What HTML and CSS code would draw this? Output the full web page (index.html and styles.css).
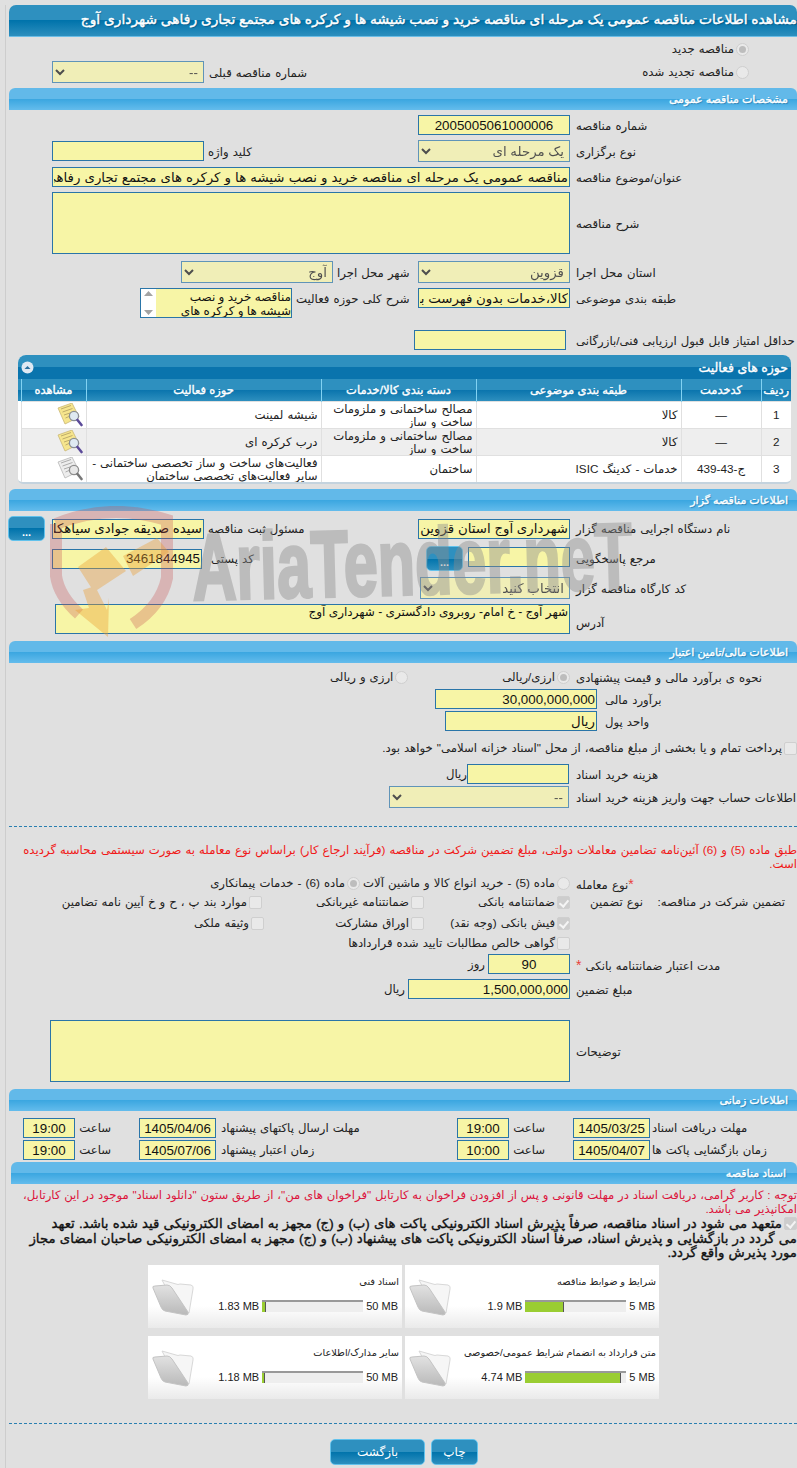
FILE: index.html
```html
<!DOCTYPE html>
<html lang="fa" dir="rtl">
<head>
    <meta charset="UTF-8">
    <title>مشاهده اطلاعات مناقصه</title>
    <link rel="stylesheet" href="styles.css">
</head>
<body>
<svg class="defs" width="0" height="0" aria-hidden="true">
    <defs>
        <linearGradient id="folder-front" x1="0" y1="0" x2="0" y2="1">
            <stop offset="0" stop-color="#e2e2e2"/>
            <stop offset="1" stop-color="#b9b9b9"/>
        </linearGradient>
    </defs>
    <symbol id="note" viewBox="0 0 26 24">
        <path d="M1 5 L15 0 L22 14 L8 21 Z" fill="currentColor" stroke="#c9b777" stroke-width=".8"/>
        <path d="M4 6 L14 2.5 M5.5 9 L15.5 5.5 M7 12 L13 10 M8.5 15 L12 13.5" stroke="#b7a566" stroke-width=".9"/>
        <circle cx="17" cy="13" r="4.6" fill="#dfeaf2" stroke="#8a8f96" stroke-width="1.3"/>
        <path d="M20.5 17 L24.5 22" class="handle" stroke-width="2.6" stroke-linecap="round"/>
    </symbol>
    <symbol id="folder" viewBox="0 0 44 40">
        <path d="M11 3 L25 7 Q27 8 29 7 L40 8 Q43 9 42 12 L38 36 L20 20 Z" fill="#f6f6f6" stroke="#d8d8d8"/>
        <path d="M2 11 Q1 9 4 9 L16 8 Q19 8 21 11 L37 35 Q38 38 35 38 L14 34 Q11 33 10 30 Z" fill="url(#folder-front)" stroke="#c4c4c4"/>
    </symbol>
</svg>

<div class="page">
    <h1 class="title">مشاهده اطلاعات مناقصه عمومی یک مرحله ای مناقصه خرید و نصب شیشه ها و کرکره های مجتمع تجاری رفاهی شهرداری آوج</h1>

    <div class="row h24 radio-top"><label class="opt opt-first"><input type="radio" disabled checked>مناقصه جدید</label></div>
    <div class="row h22">
        <label class="opt opt-first opt-w">
            <input type="radio" disabled>مناقصه تجدید شده
        </label>
        <span class="lab2 w-prev">شماره مناقصه قبلی</span>
        <select class="sel w152" disabled><option>--</option></select>
    </div>

    <h2 class="bar mt5">مشخصات مناقصه عمومی</h2>
    <div class="row h20 mt5"><span class="lab">شماره مناقصه</span><input class="inp w152 center" value="2005005061000006" readonly></div>
    <div class="row h22 mt5">
        <span class="lab">نوع برگزاری</span><select class="sel w152" disabled><option>یک مرحله ای</option></select>
        <span class="lab2 w214">کلید واژه</span><input class="inp w152" readonly>
    </div>
    <div class="row h20 mt5"><span class="lab">عنوان/موضوع مناقصه</span><input class="inp w518 wide" value="مناقصه عمومی یک مرحله ای مناقصه خرید و نصب شیشه ها و کرکره های مجتمع تجاری رفاهی شهرداری آوج" readonly></div>
    <div class="row h62 mt5"><span class="lab">شرح مناقصه</span><textarea class="inp w518 h62" readonly></textarea></div>
    <div class="row h22 mt7">
        <span class="lab">استان محل اجرا</span><select class="sel w152" disabled><option>قزوین</option></select>
        <span class="lab2 w85">شهر محل اجرا</span><select class="sel w152" disabled><option>آوج</option></select>
    </div>
    <div class="row h30 mt5 top">
        <span class="lab lab-top">طبقه بندی موضوعی</span><input class="inp w152" value="کالا،خدمات بدون فهرست بها" readonly>
        <span class="lab2 w126 lab-top">شرح کلی حوزه فعالیت</span>
        <div class="scrollbox">
            <textarea class="scroll-text" readonly>مناقصه خرید و نصب شیشه ها و کرکره های مجتمع تجاری رفاهی شهرداری آوج</textarea>
            <svg class="scroll-bar" width="15" height="28" viewBox="0 0 15 28"><path d="M3 7 L7.5 2 L12 7 Z M3 21 L12 21 L7.5 26 Z" fill="#a3a3a3"/></svg>
        </div>
    </div>
    <div class="row h20 mt12"><span class="lab">حداقل امتیاز قابل قبول ارزیابی فنی/بازرگانی</span><input class="inp w152 push4" readonly></div>

    <div class="panel">
        <div class="panel-title">
            <span>حوزه های فعالیت</span>
            <svg class="toggle" width="13" height="13" viewBox="0 0 13 13"><circle cx="6.5" cy="6.5" r="6" fill="#dfe9f3"/><path d="M3.5 8 L6.5 5 L9.5 8 Z" fill="#2a6f9e"/></svg>
        </div>
        <table class="grid">
            <colgroup><col class="c1"><col class="c2"><col class="c3"><col class="c4"><col class="c5"><col class="c6"></colgroup>
            <thead>
                <tr><th>ردیف</th><th>کدخدمت</th><th>طبقه بندی موضوعی</th><th>دسته بندی کالا/خدمات</th><th>حوزه فعالیت</th><th>مشاهده</th></tr>
            </thead>
            <tbody>
                <tr>
                    <td class="mid">1</td><td class="mid">—</td><td>کالا</td><td>مصالح ساختمانی و ملزومات ساخت و ساز</td><td>شیشه لمینت</td>
                    <td class="ico"><svg class="note" width="26" height="24"><use href="#note"/></svg></td>
                </tr>
                <tr>
                    <td class="mid">2</td><td class="mid">—</td><td>کالا</td><td>مصالح ساختمانی و ملزومات ساخت و ساز</td><td>درب کرکره ای</td>
                    <td class="ico"><svg class="note" width="26" height="24"><use href="#note"/></svg></td>
                </tr>
                <tr>
                    <td class="mid">3</td><td class="mid">ج-43-439</td><td>خدمات - کدینگ ISIC</td><td>ساختمان</td><td>فعالیت‌های ساخت و ساز تخصصی ساختمانی - سایر فعالیت‌های تخصصی ساختمان</td>
                    <td class="ico"><svg class="note off" width="26" height="24"><use href="#note"/></svg></td>
                </tr>
            </tbody>
        </table>
    </div>

    <h2 class="bar mt5">اطلاعات مناقصه گزار</h2>
    <div class="row h25 mt5">
        <span class="lab">نام دستگاه اجرایی مناقصه گزار</span><input class="inp w152" value="شهرداری آوج استان قزوین" readonly>
        <span class="lab2 w214">مسئول ثبت مناقصه</span><input class="inp w152" value="سیده صدیقه جوادی سیاهکلی" readonly>
        <button class="btn dots push7">...</button>
    </div>
    <div class="row h25 mt5">
        <span class="lab">مرجع پاسخگویی</span><input class="inp w102 up" readonly>
        <button class="btn dots push5">...</button>
        <span class="lab2 w224">کد پستی</span><input class="inp w150" value="3461844945" readonly>
    </div>
    <div class="row h22 mt6"><span class="lab">کد کارگاه مناقصه گزار</span><select class="sel w150" disabled><option>انتخاب کنید</option></select></div>
    <div class="row h30 mt5"><span class="lab lab-low">آدرس</span><textarea class="inp w515 h30" readonly>شهر آوج - خ امام- روبروی دادگستری - شهرداری آوج</textarea></div>

    <h2 class="bar mt7">اطلاعات مالی/تامین اعتبار</h2>
    <div class="row h18 mt5">
        <span class="lab">نحوه ی برآورد مالی و قیمت پیشنهادی</span>
        <label class="opt"><input type="radio" disabled checked>ارزی/ریالی</label>
        <label class="opt opt-gap"><input type="radio" disabled>ارزی و ریالی</label>
    </div>
    <div class="row h20 mt3"><span class="lab lab-short">برآورد مالی</span><input class="inp w162" value="30,000,000,000" readonly></div>
    <div class="row h20 mt2"><span class="lab lab-short">واحد پول</span><input class="inp w152" value="ریال" readonly></div>
    <div class="row h14 mt10"><label class="opt"><input type="checkbox" disabled>پرداخت تمام و یا بخشی از مبلغ مناقصه، از محل "اسناد خزانه اسلامی" خواهد بود.</label></div>
    <div class="row h20 mt9"><span class="lab">هزینه خرید اسناد</span><input class="inp w102 push1" readonly><span>ریال</span></div>
    <div class="row h22 mt2"><span class="lab">اطلاعات حساب جهت واریز هزینه خرید اسناد</span><select class="sel w180 push1" disabled><option>--</option></select></div>

    <hr class="dash dash-1">
    <p class="warn">طبق ماده (5) و (6) آئین‌نامه تضامین معاملات دولتی، مبلغ تضمین شرکت در مناقصه (فرآیند ارجاع کار) براساس نوع معامله به صورت سیستمی محاسبه گردیده است.</p>

    <div class="row h16 mt4">
        <span class="lab"><b class="star">*</b>نوع معامله</span>
        <label class="opt"><input type="radio" disabled>ماده (5) - خرید انواع کالا و ماشین آلات</label>
        <label class="opt opt-gap2"><input type="radio" disabled checked>ماده (6) - خدمات پیمانکاری</label>
    </div>
    <div class="row h16 mt3 rule">
        <span class="rule-a">تضمین شرکت در مناقصه:</span><span class="rule-b">نوع تضمین</span>
        <label class="opt g1"><input type="checkbox" disabled checked>ضمانتنامه بانکی</label>
        <label class="opt g2"><input type="checkbox" disabled>ضمانتنامه غیربانکی</label>
        <label class="opt"><input type="checkbox" disabled>موارد بند پ ، ح و خ آیین نامه تضامین</label>
    </div>
    <div class="row h16 mt5 rule-next">
        <label class="opt g1"><input type="checkbox" disabled checked>فیش بانکی (وجه نقد)</label>
        <label class="opt g2b"><input type="checkbox" disabled>اوراق مشارکت</label>
        <label class="opt"><input type="checkbox" disabled>وثیقه ملکی</label>
    </div>
    <div class="row h16 mt4 rule-next"><label class="opt"><input type="checkbox" disabled>گواهی خالص مطالبات تایید شده قراردادها</label></div>
    <div class="row h20 mt3">
        <span class="lab">مدت اعتبار ضمانتنامه بانکی<b class="star star-gap">*</b></span><input class="inp w82 center" value="90" readonly><span class="unit">روز</span>
    </div>
    <div class="row h20 mt5"><span class="lab">مبلغ تضمین</span><input class="inp w162" value="1,500,000,000" readonly><span class="unit">ریال</span></div>
    <div class="row h62 mt21"><span class="lab">توضیحات</span><textarea class="inp w520 h62" readonly></textarea></div>

    <h2 class="bar mt7">اطلاعات زمانی</h2>
    <div class="row h20 mt7 dates">
        <span class="d-lab">مهلت دریافت اسناد</span><input class="inp date" value="1405/03/25" readonly>
        <span class="t-lab">ساعت</span><input class="inp time" value="19:00" readonly>
        <span class="d-lab d-lab2">مهلت ارسال پاکتهای پیشنهاد</span><input class="inp date" value="1405/04/06" readonly>
        <span class="t-lab">ساعت</span><input class="inp time" value="19:00" readonly>
    </div>
    <div class="row h20 mt2 dates">
        <span class="d-lab">زمان بازگشایی پاکت ها</span><input class="inp date" value="1405/04/07" readonly>
        <span class="t-lab">ساعت</span><input class="inp time" value="10:00" readonly>
        <span class="d-lab d-lab2">زمان اعتبار پیشنهاد</span><input class="inp date" value="1405/07/06" readonly>
        <span class="t-lab">ساعت</span><input class="inp time" value="19:00" readonly>
    </div>

    <h2 class="bar bar-doc mt2">اسناد مناقصه</h2>
    <p class="note-text">توجه : کاربر گرامی، دریافت اسناد در مهلت قانونی و پس از افزودن فراخوان به کارتابل "فراخوان های من"، از طریق ستون "دانلود اسناد" موجود در این کارتابل، امکانپذیر می باشد.</p>
    <p class="pledge"><input type="checkbox" disabled checked>متعهد می شود در اسناد مناقصه، صرفاً پذیرش اسناد الکترونیکی پاکت های (ب) و (ج) مجهز به امضای الکترونیکی قید شده باشد. تعهد<br>می گردد در بازگشایی و پذیرش اسناد، صرفاً اسناد الکترونیکی پاکت های پیشنهاد (ب) و (ج) مجهز به امضای الکترونیکی صاحبان امضای مجاز مورد پذیرش واقع گردد.</p>

    <div class="files">
        <div class="file">
            <div class="file-body">
                <div class="file-name">شرایط و ضوابط مناقصه</div>
                <div class="meter"><span class="size" dir="ltr">5 MB</span><div class="track"><div class="fill" style="width:38%"></div></div><span class="size" dir="ltr">1.9 MB</span></div>
            </div>
            <svg class="folder" width="44" height="40"><use href="#folder"/></svg>
        </div>
        <div class="file">
            <div class="file-body">
                <div class="file-name">اسناد فنی</div>
                <div class="meter"><span class="size" dir="ltr">50 MB</span><div class="track"><div class="fill" style="width:3.66%"></div></div><span class="size" dir="ltr">1.83 MB</span></div>
            </div>
            <svg class="folder" width="44" height="40"><use href="#folder"/></svg>
        </div>
        <div class="file">
            <div class="file-body">
                <div class="file-name">متن قرارداد به انضمام شرایط عمومی/خصوصی</div>
                <div class="meter"><span class="size" dir="ltr">5 MB</span><div class="track"><div class="fill" style="width:94.8%"></div></div><span class="size" dir="ltr">4.74 MB</span></div>
            </div>
            <svg class="folder" width="44" height="40"><use href="#folder"/></svg>
        </div>
        <div class="file">
            <div class="file-body">
                <div class="file-name">سایر مدارک/اطلاعات</div>
                <div class="meter"><span class="size" dir="ltr">50 MB</span><div class="track"><div class="fill" style="width:2.36%"></div></div><span class="size" dir="ltr">1.18 MB</span></div>
            </div>
            <svg class="folder" width="44" height="40"><use href="#folder"/></svg>
        </div>
    </div>

    <hr class="dash dash-2">
    <div class="actions">
        <button class="btn print">چاپ</button>
        <button class="btn back">بازگشت</button>
    </div>
</div>

<svg class="watermark" width="660" height="140" viewBox="0 0 660 140" aria-hidden="true">
    <path d="M11 18 Q65 -4 122 14 L122 72 Q116 100 88 118 M11 18 L11 70 Q14 90 34 108" fill="none" stroke="#c8504f" stroke-opacity=".3" stroke-width="12"/>
    <path d="M33 61 L61 41 L81 65 L49 86 Z M78 50 L112 32 L124 46 L88 70 Z M38 84 L50 80 L62 104 L64 92 L63 131 L30 104 L44 102 Z" fill="#ea9a2e" fill-opacity=".38"/>
    <text class="wm-text" transform="translate(148 94) rotate(-1.5)" textLength="440" lengthAdjust="spacingAndGlyphs">AriaTender.neT</text>
</svg>
</body>
</html>
```

FILE: styles.css
```css
* {
    box-sizing: border-box;
}
body {
    margin: 0;
    padding: 5px 0 0 5px;
    background-color: #e0e0e0;
    font-family: "Liberation Sans", "DejaVu Sans", sans-serif;
    font-size: 11.7px;
    word-spacing: .8px;
    color: #222;
    position: relative;
    overflow: hidden;
    height: 1468px;
}
.defs {
    position: absolute;
}
.page {
    border-left: 1px solid #cdcdcd;
    padding-left: 3px;
    height: 1463px;
}

/* headers */
.title {
    margin: 0;
    height: 32px;
    line-height: 30px;
    font-size: 13.8px;
    font-weight: normal;
    word-spacing: 0;
    -webkit-text-stroke: .4px #fff;
    color: #fff;
    white-space: nowrap;
    overflow: hidden;
    text-shadow: 1px 1px 1px #0b5a85;
    border-radius: 7px 7px 0 0;
    border-bottom: 1px solid #6bbde6;
    background: linear-gradient(#2e90bf 0, #2e90bf 50%, #0073ab 50%, #2d8fbe 100%);
}
.bar {
    margin: 0;
    height: 22px;
    line-height: 22px;
    padding-right: 9px;
    font-size: 11px;
    font-weight: normal;
    word-spacing: 0;
    -webkit-text-stroke: .35px #fff;
    color: #fff;
    text-shadow: 1px 1px 1px #2a7fb0;
    border-radius: 6px 6px 0 0;
    background: linear-gradient(#62b9e9 0, #62b9e9 50%, #3aa6e0 50%, #64bcec 100%);
}
.bar-doc {
    margin-left: 2px;
    padding-right: 11px;
}

/* form rows */
.row {
    display: flex;
    align-items: center;
}
.row.top {
    align-items: flex-start;
}
.lab {
    flex: none;
    width: 221px;
    margin-left: 6px;
    padding-top: 1px;
    text-align: left;
    white-space: nowrap;
}
.lab-short {
    width: 194px;
    margin-left: 6px;
    padding-left: 2px;
}
.lab-top {
    margin-top: 3px;
}
.lab-low {
    margin-top: 7px;
}
.lab2 {
    flex: none;
    text-align: left;
    padding-top: 1px;
    padding-left: 4px;
    white-space: nowrap;
}
.w-prev { width: 436px; padding-left: 5px; }
.w214 { width: 214px; }
.w224 { width: 224px; padding-left: 9px; }
.w85 { width: 85px; }
.w126 { width: 126px; }

.inp,
.sel {
    flex: none;
    height: 20px;
    margin: 0;
    padding: 0 1px;
    font-family: inherit;
    font-size: 13.33px;
    color: #111;
    border: 1px solid #2a75a8;
    border-radius: 0;
    outline: none;
    resize: none;
    background-color: #f7f5a6;
}
.sel {
    height: 22px;
}
textarea.inp {
    font-size: 12px;
    line-height: 14px;
    display: block;
    overflow: hidden;
}
.wide {
    word-spacing: .4px;
}
.scrollbox {
    flex: none;
    display: flex;
    width: 152px;
    height: 30px;
    border: 1px solid #2a75a8;
    background-color: #fff;
}
.scroll-text {
    flex: 1;
    min-width: 0;
    height: 28px;
    margin: 0;
    padding: 1px 0 0;
    border: 0;
    outline: none;
    resize: none;
    overflow: hidden;
    font-family: inherit;
    font-size: 12px;
    line-height: 14px;
    color: #111;
    background-color: #f7f5a6;
}
.scroll-bar {
    flex: none;
}
.center { text-align: center; }
.w82 { width: 82px; }
.w102 { width: 102px; }
.w150 { width: 150px; }
.w152 { width: 152px; }
.w162 { width: 162px; }
.w180 { width: 180px; }
.w515 { width: 515px; }
.w518 { width: 518px; }
.w520 { width: 520px; }
.up { align-self: flex-start; margin-top: 1px; }
.push1 { margin-right: 1px; }
.push4 { margin-right: 4px; }
.push5 { margin-right: 5px; }
.push7 { margin-right: 7px; }
.unit {
    margin-right: 3px;
}

.h14 { height: 14px; }
.h16 { height: 16px; }
.h18 { height: 18px; }
.h20 { height: 20px; }
.h22 { height: 22px; }
.h24 { height: 24px; }
.h25 { height: 25px; }
.h30 { height: 30px; }
.h62 { height: 62px; }
.mt2 { margin-top: 2px; }
.mt3 { margin-top: 3px; }
.mt4 { margin-top: 4px; }
.mt5 { margin-top: 5px; }
.mt6 { margin-top: 6px; }
.mt7 { margin-top: 7px; }
.mt9 { margin-top: 9px; }
.mt10 { margin-top: 10px; }
.mt12 { margin-top: 12px; }
.mt21 { margin-top: 21px; }

/* radios and checkboxes */
.opt {
    display: inline-flex;
    align-items: center;
    white-space: nowrap;
}
.opt-first {
    margin-right: 48px;
}
.opt-w {
    width: 109px;
}
.opt-gap {
    margin-right: 94px;
}
.opt-gap2 {
    margin-right: 3px;
}
.radio-top {
    align-items: flex-start;
    padding-top: 5px;
}
input[type="radio"],
input[type="checkbox"] {
    appearance: none;
    flex: none;
    width: 13px;
    height: 13px;
    margin: 0 0 0 2px;
    border: 1px solid #cfcfcf;
    background-color: #e9e9e9;
    position: relative;
}
input[type="radio"] {
    border-radius: 50%;
}
input[type="checkbox"] {
    border-radius: 2px;
}
input[type="radio"]:checked::after {
    content: "";
    position: absolute;
    left: 2px;
    top: 2px;
    width: 7px;
    height: 7px;
    border-radius: 50%;
    background: #bdbdbd;
}
input[type="checkbox"]:checked {
    background-color: #cdcdcd;
}
input[type="checkbox"]:checked::after {
    content: "";
    position: absolute;
    left: 3px;
    top: 1px;
    width: 4px;
    height: 7px;
    border: solid #f4f4f4;
    border-width: 0 2px 2px 0;
    transform: rotate(40deg);
}

/* activity table */
.panel {
    margin: 5px 6px 0 9px;
    height: 129px;
    overflow: hidden;
    border-radius: 8px 8px 5px 5px;
    border-bottom: 2px solid #c4d3de;
    background:
        linear-gradient(#2e90bf 0, #2e90bf 50%, #0a74ad 50%, #0a74ad 100%) 0 0 / 100% 24px no-repeat,
        linear-gradient(#2e90bf 0, #2e90bf 50%, #0a74ad 50%, #2d8fbe 100%) 0 24px / 100% 22px no-repeat,
        #fff;
}
.panel-title {
    height: 24px;
    padding: 0 3px;
    display: flex;
    align-items: center;
    justify-content: space-between;
    font-size: 12.5px;
    word-spacing: 0;
    -webkit-text-stroke: .35px #fff;
    color: #fff;
}
.grid {
    table-layout: fixed;
    width: 770px;
    margin-left: 3px;
    border-collapse: collapse;
}
.c1 { width: 30px; }
.c2 { width: 80px; }
.c3 { width: 205px; }
.c4 { width: 155px; }
.c5 { width: 235px; }
.c6 { width: 65px; }
.grid th {
    height: 22px;
    padding: 0;
    font-size: 11.5px;
    word-spacing: 0;
    -webkit-text-stroke: .35px #fff;
    color: #fff;
    font-weight: normal;
    border-left: 1px solid #82d2f2;
    border-right: 1px solid #82d2f2;
}
.grid th:first-child {
    border-right: 0;
}
.grid td {
    height: 27px;
    padding: 0 3px;
    font-size: 11.7px;
    line-height: 13px;
    border: 1px solid #e0e0e0;
    overflow: hidden;
}
.grid td:first-child {
    border-right: 0;
}
.grid tbody tr:nth-child(2) td {
    background-color: #eeeeee;
}
.grid .mid {
    text-align: center;
}
.grid .ico {
    padding: 0 3px 0 0;
    text-align: right;
}
.note {
    display: block;
    color: #f6e58d;
    stroke: #5b4a99;
}
.note.off {
    color: #ededed;
    stroke: #777;
    filter: grayscale(1);
}
.handle {
    stroke: inherit;
}

/* buttons */
.btn {
    flex: none;
    font-family: inherit;
    color: #fff;
    border: 1px solid #62c2ec;
    border-radius: 5px;
    background: linear-gradient(#2e90bf 0, #2e90bf 50%, #0073ab 50%, #2d8fbe 100%);
    padding: 0;
}
.dots {
    width: 37px;
    height: 25px;
    padding-top: 6px;
    font-size: 11px;
    font-weight: bold;
}

/* dividers and notices */
.dash {
    margin: 0;
    height: 0;
    border: 0;
    border-top: 1px dashed #2a7fb0;
}
.dash-1 { margin-top: 18px; }
.dash-2 { margin-top: 24px; }
.warn {
    margin: 16px 0 0;
    padding-left: 12px;
    line-height: 14px;
    color: #f01818;
}
.star {
    color: #e8403a;
    font-weight: normal;
    font-size: 14px;
}
.star-gap {
    margin-right: 4px;
}
.rule-a {
    width: 137px;
    padding-right: 12px;
    white-space: nowrap;
}
.rule-b {
    width: 90px;
    padding-right: 17px;
    white-space: nowrap;
}
.rule-next {
    padding-right: 227px;
}
.g1 { width: 146px; }
.g2 { width: 162px; }
.g2b { width: 160px; }

.dates .d-lab {
    flex: none;
    width: 145px;
    text-align: left;
    white-space: nowrap;
}
.dates .d-lab2 {
    width: 239px;
    padding-left: 3px;
}
.date {
    width: 77px;
    margin-right: 2px;
    text-align: center;
}
.time {
    width: 52px;
    text-align: center;
}
.t-lab {
    flex: none;
    width: 64px;
    padding-right: 28px;
    white-space: nowrap;
}
.note-text {
    margin: 4px 0 0;
    padding-left: 6px;
    word-spacing: .5px;
    line-height: 14px;
    color: #dc143c;
}
.pledge {
    margin: 1px 0 0;
    font-size: 13.3px;
    word-spacing: .5px;
    -webkit-text-stroke: .35px #111;
    line-height: 14.5px;
    color: #111;
}
.pledge input {
    vertical-align: -2px;
}

/* document cards */
.files {
    display: grid;
    grid-template-columns: 254px 254px;
    gap: 8px 3px;
    margin: 4px 138px 0 0;
}
.file {
    height: 63px;
    display: flex;
    background: linear-gradient(#fff 0, #fff 65%, #eaeaea 100%);
}
.file-body {
    flex: 1;
    padding: 10px 3px 0 0;
}
.file-name {
    font-size: 9.8px;
    word-spacing: 0;
    line-height: 14px;
    white-space: nowrap;
}
.meter {
    display: flex;
    align-items: center;
    gap: 3px;
    margin-top: 11px;
    padding-right: 1px;
    font-size: 11px;
    word-spacing: 0;
}
.track {
    direction: ltr;
    width: 101px;
    height: 12px;
    background: #eee;
    border-top: 2px solid #999;
}
.fill {
    height: 10px;
    background: #9acd32;
    border-right: 1px solid #555;
}
.folder {
    flex: none;
    margin: 12px 0 0 3px;
}
.actions {
    display: flex;
    gap: 6px;
    margin: 15px 319px 0 0;
}
.actions .btn {
    height: 26px;
    font-size: 12px;
}
.print { width: 47px; }
.back { width: 95px; }

/* site watermark over the form */
.watermark {
    position: absolute;
    left: 45px;
    top: 506px;
    pointer-events: none;
}
.wm-text {
    direction: ltr;
    font-family: "Liberation Sans", sans-serif;
    font-size: 94px;
    font-weight: bold;
    fill: #8c8c8c;
    stroke: #8c8c8c;
    stroke-width: 3px;
    paint-order: stroke;
    opacity: .42;
}
```
